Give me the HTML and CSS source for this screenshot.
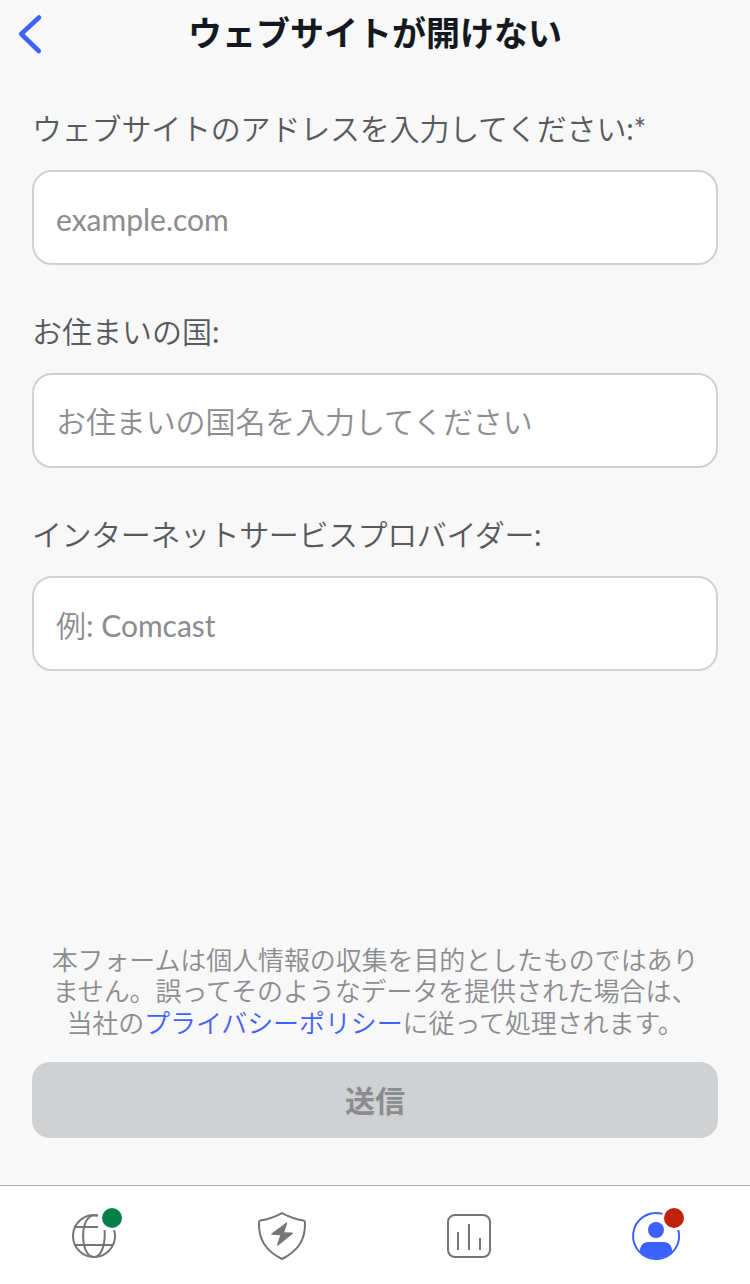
FILE: index.html
```html
<!DOCTYPE html>
<html lang="ja">

<head>
    <meta charset="UTF-8">
    <title>ウェブサイトが開けない</title>
    <meta name="viewport" content="width=device-width, initial-scale=1">
    <link rel="stylesheet" href="styles.css">
</head>

<body>
    <header class="header">
        <a class="back" href="#">
            <svg width="60" height="68" viewBox="0 0 60 68">
                <path d="M39 17.5L21.2 34L38.8 51" />
            </svg>
        </a>
        <h1 class="title">ウェブサイトが開けない</h1>
    </header>

    <form class="form">
        <div class="field">
            <label class="label label-site" for="site">ウェブサイトのアドレスを入力してください:*</label>
            <input class="input" id="site" type="text" placeholder="example.com">
        </div>
        <div class="field">
            <label class="label" for="country">お住まいの国:</label>
            <input class="input input-country" id="country" type="text" placeholder="お住まいの国名を入力してください">
        </div>
        <div class="field">
            <label class="label label-isp" for="isp">インターネットサービスプロバイダー:</label>
            <input class="input" id="isp" type="text" placeholder="例: Comcast">
        </div>

        <p class="note">本フォームは個人情報の収集を目的としたものではあり<br>ません。誤ってそのようなデータを提供された場合は、<br>当社の<a href="#">プライバシーポリシー</a>に従って処理されます。</p>
        <button class="submit" type="button" disabled>送信</button>
    </form>

    <!-- Bottom tabs -->
    <nav class="tabs">
        <a class="tab" href="#">
            <svg class="icon" viewBox="0 0 60 60">
                <path d="M34 9.4A21 21 0 1 0 50.1 24" />
                <path d="M34 9.4H30C15.500 9 15.500 51 30 51C38 51 41.500 37 40.600 24" />
                <path d="M11 21H34M11 39H49" />
                <circle class="dot-green" cx="48" cy="12" r="10" />
            </svg>
        </a>
        <a class="tab" href="#">
            <svg class="icon" viewBox="0 0 60 60">
                <path d="M30 7.200Q41 13 51.500 14.600Q53 14.900 53 16.500C53.500 34 46 45 30 53C14 45 6.500 34 7 16.500Q7 14.900 8.500 14.600Q19 13 30 7.200Z" />
                <path class="fill" d="M34.400 16.500L19.300 27.700Q19 28.700 20 28.800L28.200 29.300L25 39Q25.300 40.200 26.200 39.500L40.800 27.700Q41.200 26.600 40 26.500L32.200 26.200L35.300 17Q35.200 16 34.400 16.500Z" />
            </svg>
        </a>
        <a class="tab" href="#">
            <svg class="icon" viewBox="0 0 60 60">
                <rect x="9" y="9" width="42" height="42" rx="7" />
                <path d="M19 26V44M30 18V44M41 32V44" />
            </svg>
        </a>
        <a class="tab active" href="#">
            <svg class="icon" viewBox="0 0 60 60">
                <path d="M36.500 7.900A23 23 0 1 0 52.300 24" />
                <circle class="fill" cx="30" cy="24" r="8" />
                <path class="fill" d="M14 46C13.500 40 17 36 22 36H38C43 36 46.500 40 46 46A23.500 23.500 0 0 1 14 46Z" />
                <circle class="dot-red" cx="48" cy="12" r="10" />
            </svg>
        </a>
    </nav>
</body>

</html>
```
FILE: styles.css
```css
* {
    box-sizing: border-box;
}

body {
    margin: 0;
    height: 1284px;
    display: flex;
    flex-direction: column;
    background-color: #f8f8f8;
    font-family: Lato, "Noto Sans CJK JP DemiLight", "Noto Sans CJK JP", sans-serif;
    color: #56595d;
}

.header {
    display: grid;
    grid-template-columns: 60px 1fr 60px;
    height: 68px;
}

.back svg {
    display: block;
    fill: none;
    stroke: #3f62fb;
    stroke-width: 4.6;
    stroke-linecap: round;
    stroke-linejoin: round;
}

.title {
    margin: 0;
    text-align: center;
    font-family: Lato, "Noto Sans CJK JP", sans-serif;
    font-size: 34px;
    line-height: 66px;
    font-weight: bold;
    color: #14181f;
}

.form {
    flex: 1;
    display: flex;
    flex-direction: column;
    padding: 42px 32px 47px;
}

.field {
    margin-bottom: 48px;
}

.label {
    display: block;
    height: 36px;
    margin-bottom: 24px;
    font-size: 30px;
    line-height: 36px;
    white-space: nowrap;
}

.label-site {
    letter-spacing: -0.2px;
}

.label-isp {
    letter-spacing: -0.4px;
}

.input {
    display: block;
    width: 100%;
    height: 95px;
    padding: 2px 22px 0;
    border: 2px solid #d0d1d2;
    border-radius: 20px;
    outline: none;
    background-color: #fff;
    font-family: inherit;
    font-size: 30px;
}

.input-country {
    padding-top: 0;
    letter-spacing: -0.1px;
}

.input::placeholder {
    color: #8b8c90;
    opacity: 1;
}

.note {
    margin: auto 0 23px;
    text-align: center;
    font-size: 26px;
    line-height: 31.5px;
    letter-spacing: -0.1px;
    white-space: nowrap;
    color: #8b8c90;
}

.note a {
    color: #3f62fb;
    text-decoration: none;
}

.submit {
    height: 76px;
    padding: 0 0 2px;
    border: none;
    border-radius: 18px;
    background-color: #d0d1d3;
    font-family: Lato, "Noto Sans CJK JP", sans-serif;
    font-size: 30px;
    font-weight: bold;
    color: #8b8c90;
}

.tabs {
    display: grid;
    grid-template-columns: 188px 188px 186px 188px;
    height: 99px;
    padding-top: 20px;
    border-top: 1px solid #a9a9aa;
    background-color: #fff;
}

.tab {
    display: flex;
    justify-content: center;
    color: #757575;
}

.tab.active {
    color: #3d61ff;
}

.icon {
    width: 60px;
    height: 60px;
    fill: none;
    stroke: currentColor;
    stroke-width: 2;
}

.icon .fill {
    fill: currentColor;
    stroke: none;
}

.icon .dot-green {
    fill: #067f48;
    stroke: none;
}

.icon .dot-red {
    fill: #c2210f;
    stroke: none;
}
```
